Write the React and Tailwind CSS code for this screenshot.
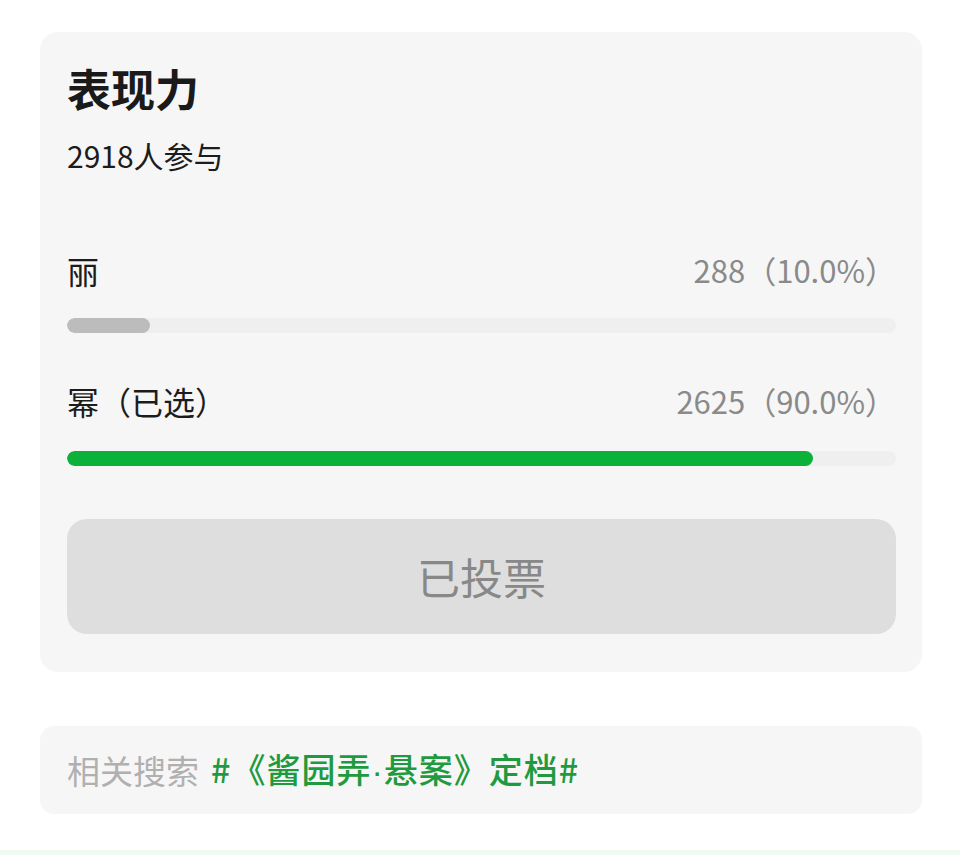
const FONT = "font-['Noto_Sans_CJK_SC','Noto_Sans',sans-serif]"

const OPTIONS = [
  { label: "丽", count: 288, pct: 10, chosen: false },
  { label: "幂（已选）", count: 2625, pct: 90, chosen: true },
]

function OptionRow({ option, first }) {
  return (
    <div className={first ? "mt-[79px]" : "mt-[50px]"}>
      <div className="flex items-center justify-between leading-[36px]">
        <span className="text-[32px] text-[#1c1c1c]">{option.label}</span>
        <span className="text-[31px] text-[#8a8a8a]">
          {option.count}（{option.pct.toFixed(1)}%）
        </span>
      </div>
      <div className={`${first ? "mt-[30px]" : "mt-[32px]"} h-[15px] overflow-hidden rounded-full bg-[#efefef]`}>
        <div
          className={`h-full rounded-full ${option.chosen ? "bg-[#0cb13a]" : "bg-[#bcbcbc]"}`}
          style={{ width: `${option.pct}%` }}
        />
      </div>
    </div>
  )
}

export default function App() {
  return (
    <div className={`relative h-[855px] w-[960px] overflow-hidden bg-white ${FONT}`}>
      <div className="ml-[40px] mt-[32px] w-[882px] rounded-[18px] bg-[#f6f6f6] pb-[38px] pl-[27px] pr-[26px] pt-[34px]">
        <h1 className="text-[44px] font-bold leading-[44px] text-[#1a1a1a]">表现力</h1>
        <p className="mt-[27px] text-[30px] leading-[36px] text-[#1c1c1c]">2918人参与</p>

        {OPTIONS.map((o, i) => (
          <OptionRow key={o.label} option={o} first={i === 0} />
        ))}

        <button className="mt-[53px] flex h-[115px] w-full items-center justify-center rounded-[20px] bg-[#dedede] text-[43px] text-[#888888]">
          已投票
        </button>
      </div>

      <div className="ml-[40px] mt-[54px] flex h-[88px] w-[882px] items-center rounded-[14px] bg-[#f6f6f6] pl-[27px] leading-[40px]">
        <span className="text-[33px] text-[#b0b0b0]">相关搜索</span>
        <span className="ml-3 text-[34px] font-medium tracking-[1px] text-[#1f9a3e]">
          #《酱园弄<span className="font-['Liberation_Sans',sans-serif]">·</span>悬案》定档#
        </span>
      </div>

      <div className="absolute bottom-0 left-0 h-[5px] w-full bg-[#f1faf0]" />
    </div>
  )
}
